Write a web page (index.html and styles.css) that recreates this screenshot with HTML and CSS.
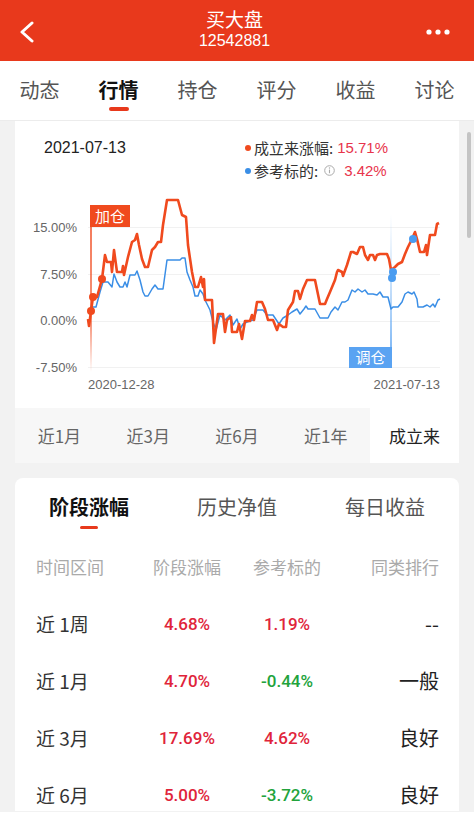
FILE: index.html
```html
<!DOCTYPE html>
<html>
<head>
  <title>买大盘</title>
  <link rel="stylesheet" href="styles.css">
</head>
<body>
  <div class="topbar">
    <svg class="back" width="16" height="22" viewBox="0 0 16 22">
      <polyline points="13,2 3,11 13,20" fill="none" stroke="#fff" stroke-width="3" stroke-linecap="round" stroke-linejoin="round"/>
    </svg>
    <div class="title">
      <div class="name">买大盘</div>
      <div class="code">12542881</div>
    </div>
    <svg class="more" width="26" height="8" viewBox="0 0 26 8">
      <circle cx="3" cy="4" r="2.6" fill="#fff"/>
      <circle cx="12" cy="4" r="2.6" fill="#fff"/>
      <circle cx="21" cy="4" r="2.6" fill="#fff"/>
    </svg>
  </div>

  <div class="tabs">
    <div class="tab">动态</div>
    <div class="tab active">行情</div>
    <div class="tab">持仓</div>
    <div class="tab">评分</div>
    <div class="tab">收益</div>
    <div class="tab">讨论</div>
  </div>

  <div class="page">
    <div class="scrollbar"></div>

    <div class="card chart-card">
      <div class="legend">
        <div class="date">2021-07-13</div>
        <div class="series">
          <div class="series-row"><span class="dot red"></span>成立来涨幅: <span class="val">15.71%</span></div>
          <div class="series-row"><span class="dot blue"></span>参考标的:
            <svg class="info" width="11" height="11" viewBox="0 0 11 11">
              <circle cx="5.5" cy="5.5" r="4.8" fill="none" stroke="#aaa" stroke-width="1"/>
              <line x1="5.5" y1="4.6" x2="5.5" y2="8.2" stroke="#aaa" stroke-width="1.1"/>
              <circle cx="5.5" cy="3" r="0.7" fill="#aaa"/>
            </svg>
            <span class="val">3.42%</span></div>
        </div>
      </div>

      <svg class="chart" width="444" height="226" viewBox="0 0 444 226">
        <defs>
          <linearGradient id="addFade" gradientUnits="userSpaceOnUse" x1="0" y1="206" x2="0" y2="372">
            <stop offset="0" stop-color="#f04a1e" stop-opacity="1"/>
            <stop offset="0.7" stop-color="#f04a1e" stop-opacity="0.8"/>
            <stop offset="1" stop-color="#f04a1e" stop-opacity="0"/>
          </linearGradient>
          <linearGradient id="adjFade" gradientUnits="userSpaceOnUse" x1="0" y1="214" x2="0" y2="348">
            <stop offset="0" stop-color="#8cc0f5" stop-opacity="0"/>
            <stop offset="1" stop-color="#5aa3f2" stop-opacity="1"/>
          </linearGradient>
        </defs>
        <g transform="translate(-15 -182)">
          <g class="grid">
            <line x1="88" y1="227.5" x2="440" y2="227.5"/>
            <line x1="88" y1="274.5" x2="440" y2="274.5"/>
            <line x1="88" y1="321.5" x2="440" y2="321.5"/>
            <line x1="88" y1="367.5" x2="440" y2="367.5"/>
          </g>
          <g class="axis">
            <text x="77" y="232">15.00%</text>
            <text x="77" y="279">7.50%</text>
            <text x="77" y="325">0.00%</text>
            <text x="77" y="372">-7.50%</text>
            <text x="88" y="389" class="start">2020-12-28</text>
            <text x="440" y="389">2021-07-13</text>
          </g>

          <line x1="91" y1="206" x2="91" y2="372" stroke="url(#addFade)" stroke-width="1.5"/>
          <line x1="391" y1="214" x2="391" y2="348" stroke="url(#adjFade)" stroke-width="1.5"/>

          <polyline class="line-blue" points="90,307 96,307 100,292 103,282 108,282 112,287 114,274 117,282 120,287 123,287 125,282 127,287 130,275 135,275 137,271 140,280 143,292 145,296 148,296 152,289 155,285 158,289 163,289 167,260 180,260 182,258 185,258 187,272 190,280 193,287 195,296 198,296 200,290 203,294 205,300 210,310 213,322 216,330 220,315 225,320 230,315 233,325 237,319 240,329 243,324 247,322 253,320 257,310 263,310 267,315 273,315 279,324 283,318 288,315 292,312 297,309 300,314 304,309 306,306 308,309 315,309 320,318 328,318 331,312 335,307 338,310 342,302 345,302 348,300 352,290 355,292 358,289 362,292 365,290 368,294 373,294 377,295 380,292 383,297 388,297 391,309 393,307 398,307 402,302 405,294 408,292 412,294 414,292 417,299 418,307 423,307 427,305 430,307 433,304 435,307 438,300 440,299"/>
          <polyline class="line-red" points="88,319 89,326 91,311 93,297 97,297 102,279 105,255 107,262 111,262 112,272 114,250 117,272 122,272 123,266 124,275 128,257 132,242 135,240 137,234 139,245 142,259 145,267 148,267 152,250 155,247 158,242 161,242 163,225 167,200 178,200 182,215 186,217 188,245 192,272 195,287 198,287 201,277 203,287 204,279 205,300 212,300 214,343 218,314 223,314 225,332 227,320 231,317 232,332 237,332 239,324 242,339 245,321 250,321 252,315 254,320 257,302 262,302 265,309 268,320 273,320 277,330 279,324 283,327 286,327 288,310 293,302 295,291 298,291 300,299 303,289 307,280 315,280 320,304 325,304 327,299 330,292 335,280 337,272 338,270 342,272 343,276 347,265 351,252 353,252 357,254 360,247 363,247 365,255 368,260 370,255 373,255 375,260 377,255 380,254 387,254 389,259 391,270 395,267 398,264 402,262 405,254 408,247 412,239 415,232 417,239 420,252 424,252 426,245 427,255 430,235 435,235 437,224 439,223"/>

          <circle cx="91" cy="311" r="4" fill="#f04a1e"/>
          <circle cx="93" cy="297" r="4" fill="#f04a1e"/>
          <circle cx="102" cy="279" r="4" fill="#f04a1e"/>
          <circle cx="392" cy="278" r="4" fill="#4a9cf0"/>
          <circle cx="393" cy="272" r="4" fill="#4a9cf0"/>
          <circle cx="413" cy="239" r="4" fill="#4a9cf0"/>

          <rect x="90" y="205" width="40" height="22" fill="#f04a1e"/>
          <text class="flag" x="110" y="221.5">加仓</text>
          <rect x="349" y="347" width="43" height="21" fill="#5aa3f2"/>
          <text class="flag" x="370.5" y="363">调仓</text>
        </g>
      </svg>

      <div class="ranges">
        <div class="range">近1月</div>
        <div class="range">近3月</div>
        <div class="range">近6月</div>
        <div class="range">近1年</div>
        <div class="range active">成立来</div>
      </div>
    </div>

    <div class="card perf-card">
      <div class="subtabs">
        <div class="subtab active">阶段涨幅</div>
        <div class="subtab">历史净值</div>
        <div class="subtab">每日收益</div>
      </div>
      <div class="row head">
        <div>时间区间</div>
        <div class="c">阶段涨幅</div>
        <div class="c">参考标的</div>
        <div class="r">同类排行</div>
      </div>
      <div class="row">
        <div class="period">近 1周</div>
        <div class="c num up">4.68%</div>
        <div class="c num up">1.19%</div>
        <div class="r rank">--</div>
      </div>
      <div class="row">
        <div class="period">近 1月</div>
        <div class="c num up">4.70%</div>
        <div class="c num down">-0.44%</div>
        <div class="r rank">一般</div>
      </div>
      <div class="row">
        <div class="period">近 3月</div>
        <div class="c num up">17.69%</div>
        <div class="c num up">4.62%</div>
        <div class="r rank">良好</div>
      </div>
      <div class="row">
        <div class="period">近 6月</div>
        <div class="c num up">5.00%</div>
        <div class="c num down">-3.72%</div>
        <div class="r rank">良好</div>
      </div>
    </div>
  </div>
  <div class="footer"></div>
</body>
</html>
```

FILE: styles.css
```css
body {
  margin: 0;
  width: 474px;
  background: #f2f2f2;
  font-family: "Noto Sans CJK SC", sans-serif;
  color: #333;
}

.topbar {
  height: 61px;
  background: #e8391c;
  display: flex;
  align-items: center;
  justify-content: space-between;
  padding: 0 22px 0 19px;
  box-sizing: border-box;
  color: #fff;
}
.back {
  margin-top: 2px;
}
.more {
  margin-top: 2px;
}
.title {
  text-align: center;
  margin-left: 8px;
}
.name {
  font-size: 19px;
  line-height: 22px;
  margin-top: -2px;
}
.code {
  font-family: "Liberation Sans", sans-serif;
  font-size: 16px;
  line-height: 20px;
  margin-top: 1px;
}

.tabs {
  display: grid;
  grid-template-columns: repeat(6, 1fr);
  height: 59px;
  background: #fff;
  border-bottom: 1px solid #ececec;
}
.tab {
  font-size: 20px;
  color: #555;
  text-align: center;
  line-height: 58px;
  position: relative;
}
.tab.active {
  color: #111;
  font-weight: 700;
}
.tab.active::after {
  content: "";
  position: absolute;
  left: 50%;
  margin-left: -10px;
  top: 46px;
  width: 20px;
  height: 4px;
  border-radius: 2px;
  background: #e8391c;
}

.page {
  padding: 0 15px;
  position: relative;
}
.scrollbar {
  position: absolute;
  right: 3px;
  top: 11px;
  width: 4px;
  height: 106px;
  border-radius: 2px;
  background: #c4c4c4;
}
.card {
  background: #fff;
}

.legend {
  display: flex;
  justify-content: space-between;
  padding: 15px 0 0 29px;
  height: 61px;
  box-sizing: border-box;
}
.date {
  font-family: "Liberation Sans", sans-serif;
  font-size: 16px;
  line-height: 23px;
  color: #222;
}
.series {
  width: 214px;
  font-size: 15px;
  line-height: 23px;
  color: #333;
}
.series-row {
  display: flex;
  align-items: center;
}
.dot {
  width: 6px;
  height: 6px;
  border-radius: 50%;
  margin-right: 3px;
}
.dot.red {
  background: #f04a1e;
}
.dot.blue {
  background: #3a8ee6;
}
.info {
  margin: 0 5px 0 6px;
}
.val {
  font-family: "Liberation Sans", sans-serif;
  font-size: 15px;
  color: #e8344c;
  margin-left: 4px;
}

.chart {
  display: block;
}
.grid line {
  stroke: #f1f1f1;
  stroke-width: 1;
}
.axis text {
  font-family: "Liberation Sans", sans-serif;
  font-size: 13px;
  fill: #666;
  text-anchor: end;
}
.axis text.start {
  text-anchor: start;
}
.line-red {
  fill: none;
  stroke: #f04a1e;
  stroke-width: 2.6;
  stroke-linejoin: round;
}
.line-blue {
  fill: none;
  stroke: #3a8ee6;
  stroke-width: 1.5;
  stroke-linejoin: round;
}
.flag {
  font-family: "Noto Sans CJK SC", sans-serif;
  font-size: 15px;
  fill: #fff;
  text-anchor: middle;
}

.ranges {
  display: grid;
  grid-template-columns: repeat(5, 1fr);
  background: #f7f7f7;
  height: 55px;
}
.range {
  font-size: 17px;
  color: #666;
  text-align: center;
  line-height: 55px;
}
.range.active {
  background: #fff;
  color: #222;
}

.perf-card {
  margin-top: 15px;
  border-radius: 8px 8px 0 0;
  height: 333px;
  overflow: hidden;
}
.subtabs {
  display: grid;
  grid-template-columns: repeat(3, 1fr);
  height: 60px;
}
.subtab {
  font-size: 20px;
  color: #555;
  text-align: center;
  line-height: 58px;
  position: relative;
}
.subtab.active {
  color: #111;
  font-weight: 700;
}
.subtab.active::after {
  content: "";
  position: absolute;
  left: 50%;
  margin-left: -9px;
  top: 48px;
  width: 18px;
  height: 3px;
  border-radius: 2px;
  background: #e8391c;
}
.row {
  display: grid;
  grid-template-columns: 101px 100px 100px 1fr;
  align-items: center;
  height: 57px;
  padding: 0 20px 0 21px;
}
.row.head {
  font-size: 17px;
  color: #aaa;
}
.c {
  text-align: center;
}
.r {
  text-align: right;
}
.period {
  font-size: 19px;
  color: #333;
}
.num {
  font-family: Roboto, sans-serif;
  font-weight: 500;
  font-size: 17px;
}
.up {
  color: #e0243a;
}
.down {
  color: #22a33c;
}
.rank {
  font-size: 20px;
  color: #222;
}
.footer {
  height: 10px;
  margin-top: 1px;
  background: #fff;
}
```
